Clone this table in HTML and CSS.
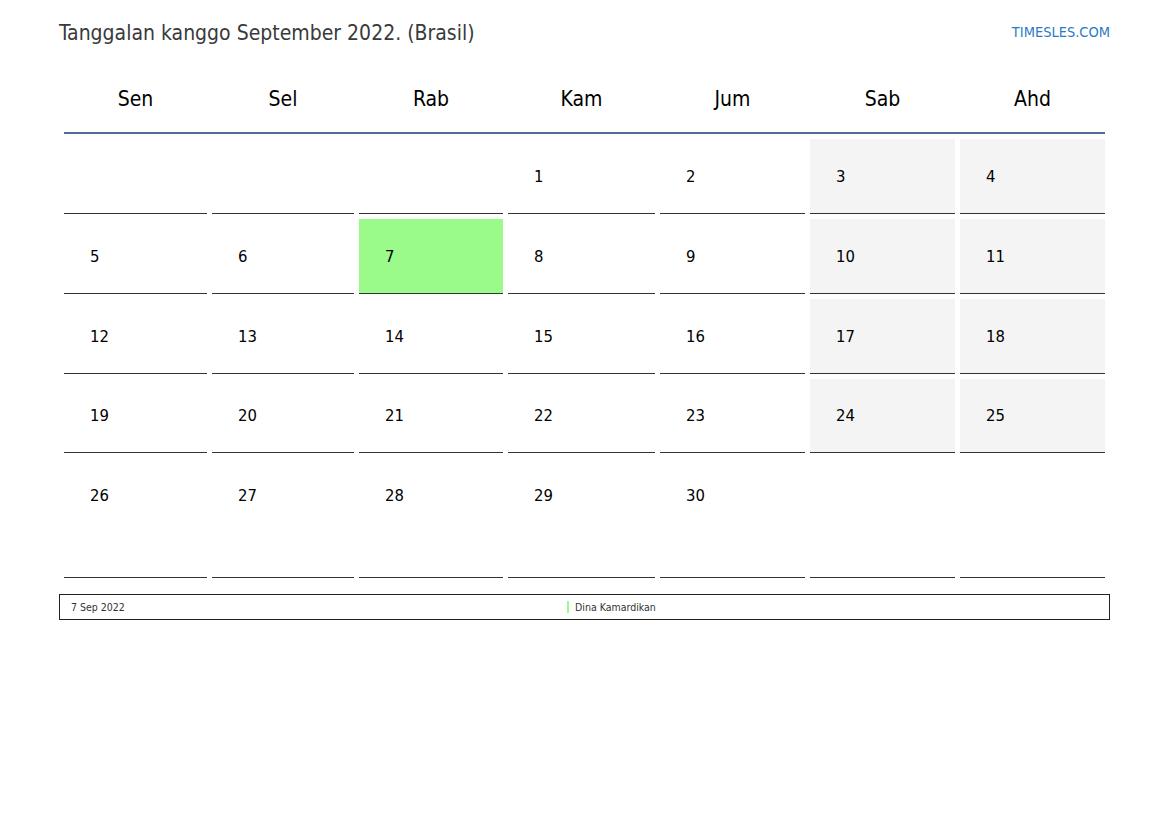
FILE: index.html
```html
<!DOCTYPE html>
<html>
<head>
<meta charset="utf-8">
<link rel="stylesheet" href="styles.css">
</head>
<body>
<div class="page">
  <div class="top">
    <div class="title">Tanggalan kanggo September 2022. (Brasil)</div>
    <div class="brand">TIMESLES.COM</div>
  </div>
  <div class="cal">
    <div class="head">
      <div>Sen</div><div>Sel</div><div>Rab</div><div>Kam</div><div>Jum</div><div>Sab</div><div>Ahd</div>
    </div>
    <div class="rule"></div>
    <div class="grid">
      <div class="cell"></div><div class="cell"></div><div class="cell"></div>
      <div class="cell">1</div><div class="cell">2</div><div class="cell we">3</div><div class="cell we">4</div>
      <div class="cell">5</div><div class="cell">6</div><div class="cell hol">7</div>
      <div class="cell">8</div><div class="cell">9</div><div class="cell we">10</div><div class="cell we">11</div>
      <div class="cell">12</div><div class="cell">13</div><div class="cell">14</div>
      <div class="cell">15</div><div class="cell">16</div><div class="cell we">17</div><div class="cell we">18</div>
      <div class="cell short">19</div><div class="cell short">20</div><div class="cell short">21</div>
      <div class="cell short">22</div><div class="cell short">23</div><div class="cell short we">24</div><div class="cell short we">25</div>
      <div class="cell last">26</div><div class="cell last">27</div><div class="cell last">28</div>
      <div class="cell last">29</div><div class="cell last">30</div><div class="cell last"></div><div class="cell last"></div>
    </div>
  </div>
  <div class="legend">
    <div class="ldate">7 Sep 2022</div>
    <div class="lname"><span class="bar"></span>Dina Kamardikan</div>
  </div>
</div>
</body>
</html>
```
FILE: styles.css
```css
html, body {
  margin: 0;
  padding: 0;
  background: #fff;
}
body {
  font-family: "DejaVu Sans Condensed", "DejaVu Sans", sans-serif;
  color: #000;
}
.page {
  width: 1051px;
  padding: 0 0 0 59px;
}
.top {
  display: flex;
  justify-content: space-between;
  align-items: flex-start;
  height: 70px;
}
.title {
  font-size: 21px;
  color: #3a3a3a;
  padding-top: 21px;
  line-height: 24px;
}
.brand {
  font-size: 14.5px;
  color: #2b7bc4;
  padding-top: 24px;
  line-height: 17px;
}
.cal {
  margin: 0 5px;
}
.head,
.grid {
  display: grid;
  grid-template-columns: 143px 142px 144px 147px 145px 145px 145px;
  column-gap: 5px;
}
.head {
  height: 62px;
}
.head div {
  text-align: center;
  font-size: 21px;
  line-height: 24px;
  padding-top: 17px;
}
.rule {
  height: 2px;
  background: #4e6e98;
  margin-bottom: 5px;
}
.grid {
  row-gap: 5px;
}
.cell {
  border-bottom: 1px solid #333;
  font-size: 16.5px;
  line-height: 20px;
  padding: 28px 0 0 26px;
  box-sizing: border-box;
  height: 75px;
}
.cell.short {
  height: 74px;
  padding-top: 27px;
}
.cell.we {
  background: #f4f4f4;
}
.cell.hol {
  background: #9afa8a;
}
.cell.last {
  height: 120px;
}
.legend {
  margin-top: 16px;
  border: 1px solid #222;
  height: 26px;
  box-sizing: border-box;
  display: grid;
  grid-template-columns: 507px 1fr;
  align-items: center;
  font-size: 10.5px;
  line-height: 12px;
  color: #333;
  padding-bottom: 1px;
}
.ldate {
  padding-left: 11px;
}
.lname {
  display: flex;
  align-items: center;
}
.bar {
  display: inline-block;
  width: 2px;
  height: 12px;
  background: #9afa8a;
  margin-right: 6px;
}
```
